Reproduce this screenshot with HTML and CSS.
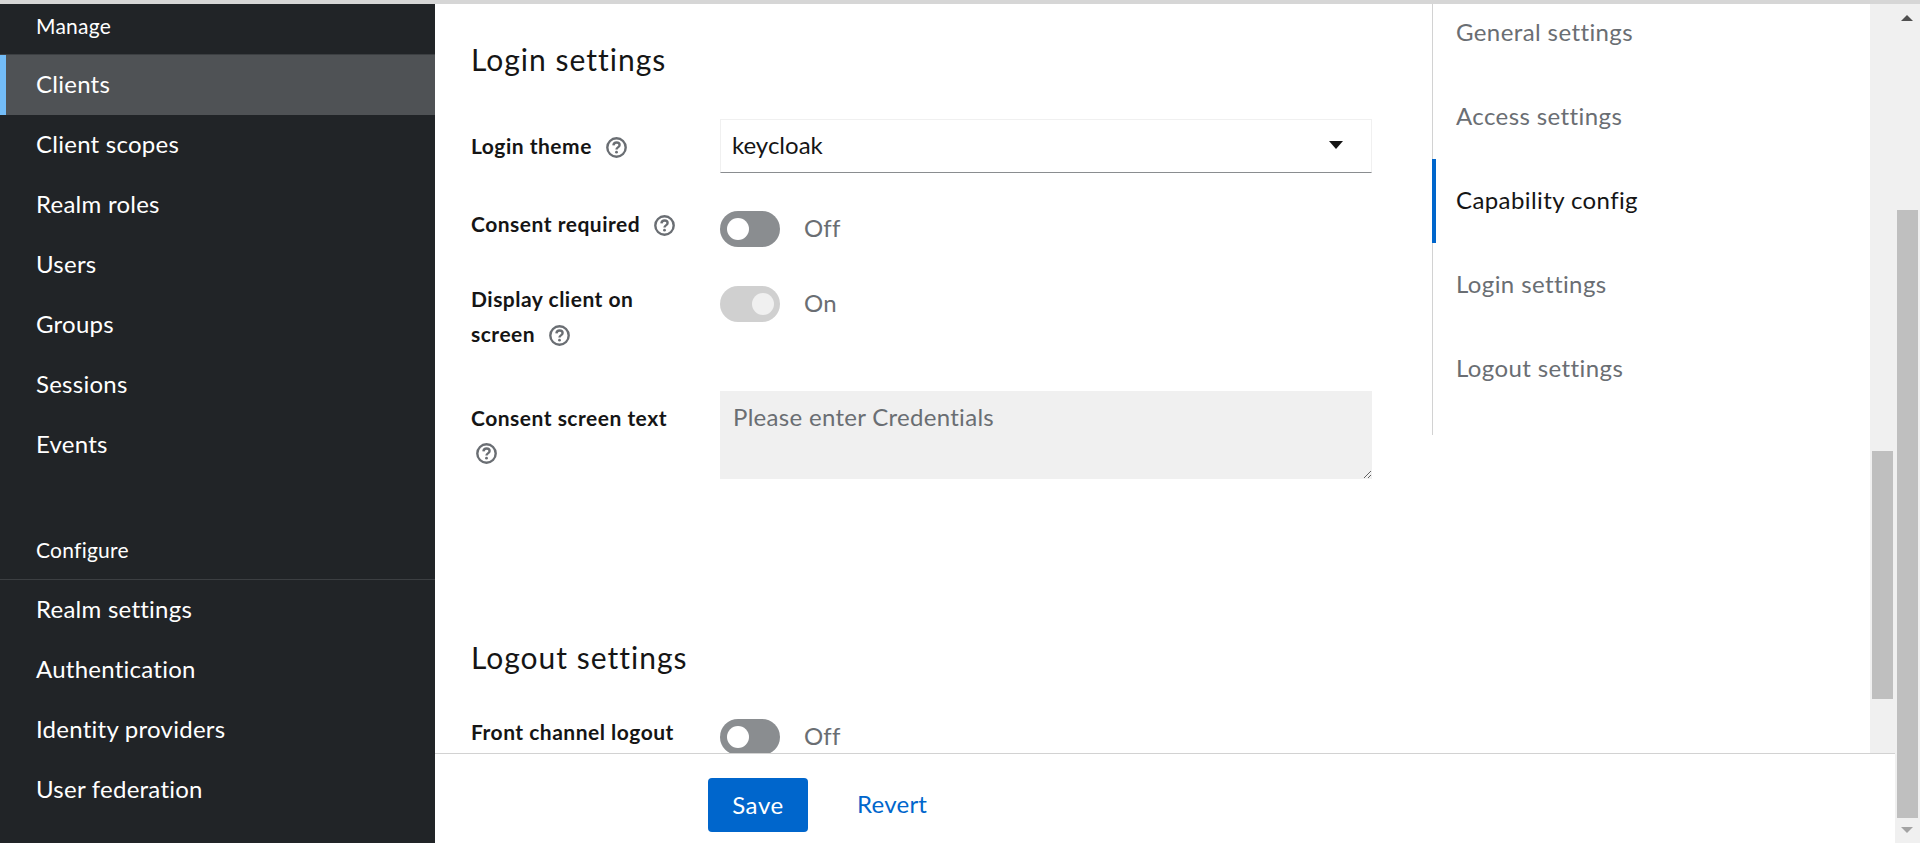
FILE: index.html
```html
<!DOCTYPE html>
<html lang="en">

<head>
    <meta charset="UTF-8">
    <meta name="viewport" content="width=device-width, initial-scale=1.0">
    <title>Client details</title>
    <link rel="stylesheet" href="styles.css">
</head>

<body>
    <div class="top-strip"></div>
    <div class="shell">
        <aside class="sidebar">
            <h2 class="nav-title">Manage</h2>
            <ul class="nav-list">
                <li class="nav-item nav-item-active">Clients</li>
                <li class="nav-item">Client scopes</li>
                <li class="nav-item">Realm roles</li>
                <li class="nav-item">Users</li>
                <li class="nav-item">Groups</li>
                <li class="nav-item">Sessions</li>
                <li class="nav-item">Events</li>
            </ul>
            <h2 class="nav-title nav-title-second">Configure</h2>
            <ul class="nav-list">
                <li class="nav-item">Realm settings</li>
                <li class="nav-item">Authentication</li>
                <li class="nav-item">Identity providers</li>
                <li class="nav-item">User federation</li>
            </ul>
        </aside>

        <div class="page">
            <div class="page-body">
                <main class="form-col">
                    <h2 class="section-title section-title-first">Login settings</h2>

                    <div class="form-row form-row-select">
                        <label class="field-label field-label-input">Login theme
                            <svg class="help-icon" viewBox="0 0 21 21"><circle cx="10.5" cy="10.5" r="9.2"/><path d="M7.4 8.3c.2-1.800 1.500-2.800 3.200-2.800 1.800 0 3 1.100 3 2.500 0 2.400-3.100 2.300-3.100 4.400"/><circle class="help-dot" cx="10.500" cy="15.200" r="1.400"/></svg>
                        </label>
                        <div class="select-box">
                            <span>keycloak</span>
                            <svg class="select-caret" viewBox="0 0 14 8"><path d="M0 0h14L7 8z"/></svg>
                        </div>
                    </div>

                    <div class="form-row">
                        <label class="field-label">Consent required
                            <svg class="help-icon" viewBox="0 0 21 21"><circle cx="10.5" cy="10.5" r="9.2"/><path d="M7.4 8.3c.2-1.800 1.500-2.800 3.200-2.800 1.800 0 3 1.100 3 2.500 0 2.400-3.100 2.300-3.100 4.400"/><circle class="help-dot" cx="10.500" cy="15.200" r="1.400"/></svg>
                        </label>
                        <div class="switch-field">
                            <span class="switch"><span class="switch-knob"></span></span>
                            <span class="switch-text">Off</span>
                        </div>
                    </div>

                    <div class="form-row form-row-tall">
                        <label class="field-label">Display client on screen
                            <svg class="help-icon" viewBox="0 0 21 21"><circle cx="10.5" cy="10.5" r="9.2"/><path d="M7.4 8.3c.2-1.800 1.500-2.800 3.200-2.800 1.800 0 3 1.100 3 2.500 0 2.400-3.100 2.300-3.100 4.400"/><circle class="help-dot" cx="10.500" cy="15.200" r="1.400"/></svg>
                        </label>
                        <div class="switch-field">
                            <span class="switch switch-on"><span class="switch-knob"></span></span>
                            <span class="switch-text">On</span>
                        </div>
                    </div>

                    <div class="form-row">
                        <label class="field-label field-label-input">Consent screen text
                            <svg class="help-icon help-icon-wrapped" viewBox="0 0 21 21"><circle cx="10.5" cy="10.5" r="9.2"/><path d="M7.4 8.3c.2-1.800 1.500-2.800 3.200-2.800 1.800 0 3 1.100 3 2.500 0 2.400-3.100 2.300-3.100 4.400"/><circle class="help-dot" cx="10.500" cy="15.200" r="1.400"/></svg>
                        </label>
                        <textarea class="text-box" placeholder="Please enter Credentials" disabled></textarea>
                    </div>

                    <h2 class="section-title section-title-next">Logout settings</h2>

                    <div class="form-row">
                        <label class="field-label">Front channel logout</label>
                        <div class="switch-field">
                            <span class="switch"><span class="switch-knob"></span></span>
                            <span class="switch-text">Off</span>
                        </div>
                    </div>
                </main>

                <nav class="jump-col">
                    <ul class="jump-list">
                        <li class="jump-item">General settings</li>
                        <li class="jump-item">Access settings</li>
                        <li class="jump-item jump-item-active">Capability config</li>
                        <li class="jump-item">Login settings</li>
                        <li class="jump-item">Logout settings</li>
                    </ul>
                </nav>

                <div class="inner-scroll"><div class="inner-thumb"></div></div>
            </div>

            <footer class="page-footer">
                <button class="btn-save">Save</button>
                <a class="btn-revert">Revert</a>
            </footer>
        </div>

        <div class="outer-scroll">
            <svg class="scroll-arrow" viewBox="0 0 12 6"><path d="M6 0l6 6H0z"/></svg>
            <div class="outer-thumb"></div>
            <svg class="scroll-arrow scroll-arrow-down" viewBox="0 0 12 6"><path d="M0 0h12L6 6z"/></svg>
        </div>
    </div>
</body>

</html>
```
FILE: styles.css
```css
* {
    margin: 0;
    padding: 0;
    box-sizing: border-box;
}

body {
    height: 843px;
    overflow: hidden;
    background-color: #ffffff;
    color: #151515;
    font-family: "Lato", "Noto Sans", sans-serif;
    font-size: 24px;
    letter-spacing: 0.25px;
}

.top-strip {
    height: 4px;
    background-color: #d6d6d6;
}

.shell {
    display: flex;
    height: 839px;
}

/* left nav */
.sidebar {
    width: 435px;
    flex-shrink: 0;
    background-color: #212427;
    color: #ffffff;
}

.nav-title {
    display: flex;
    align-items: center;
    height: 51px;
    padding: 0 36px 7px;
    border-bottom: 1px solid #3c3f42;
    font-size: 21px;
    font-weight: 400;
}

.nav-title-second {
    height: 55px;
    margin-top: 50px;
    padding-bottom: 5px;
}

.nav-list {
    list-style: none;
}

.nav-item {
    display: flex;
    align-items: center;
    height: 60px;
    padding: 0 0 3px 36px;
}

.nav-item-active {
    padding-left: 30px;
    border-left: 6px solid #73bcf7;
    background-color: #4f5255;
}

/* middle part */
.page {
    flex: 1;
    min-width: 0;
    display: flex;
    flex-direction: column;
}

.page-body {
    display: flex;
    height: 749px;
    overflow: hidden;
}

.form-col {
    width: 997px;
    padding: 33px 0 0 36px;
}

.section-title {
    height: 45px;
    margin-bottom: 36px;
    font-size: 30px;
    font-weight: 400;
    line-height: 45px;
    letter-spacing: 1px;
}

.section-title-first {
    margin-bottom: 37px;
}

.section-title-next {
    margin-top: 156px;
    margin-bottom: 34px;
}

.form-row {
    display: grid;
    grid-template-columns: 249px 652px;
    margin-bottom: 34px;
}

.form-row-select {
    margin-bottom: 33px;
}

.form-row-tall {
    margin-bottom: 40px;
}

.field-label {
    font-size: 21px;
    font-weight: 700;
    line-height: 35px;
    letter-spacing: 0.5px;
    padding-right: 30px;
}

.field-label-input {
    padding-top: 9px;
}

.help-icon {
    width: 21px;
    height: 21px;
    margin-left: 8px;
    vertical-align: -4px;
    fill: none;
    stroke: #6a6e73;
    stroke-width: 2.4;
}

.help-icon-wrapped {
    display: block;
    margin: 8px 0 0 5px;
}

.help-dot {
    fill: #6a6e73;
    stroke: none;
}

.select-box {
    display: flex;
    align-items: center;
    justify-content: space-between;
    height: 54px;
    padding: 0 28px 3px 11px;
    border: 1px solid #f0f0f0;
    border-bottom-color: #8a8d90;
    letter-spacing: 0;
}

.select-caret {
    width: 14px;
    height: 8px;
    fill: #151515;
}

.switch-field {
    display: flex;
    align-items: center;
    align-self: start;
    margin-top: 5px;
}

.switch {
    display: flex;
    align-items: center;
    width: 60px;
    height: 36px;
    padding-left: 7px;
    border-radius: 18px;
    background-color: #8a8d90;
}

.switch-knob {
    width: 22px;
    height: 22px;
    border-radius: 50%;
    background-color: #ffffff;
}

.switch-on {
    justify-content: flex-end;
    padding: 0 6px 0 0;
    background-color: #d0d0d0;
}

.switch-on .switch-knob {
    background-color: #f0f0f0;
}

.switch-text {
    margin-left: 24px;
    padding-bottom: 3px;
    color: #6a6e73;
}

.text-box {
    display: block;
    width: 652px;
    height: 88px;
    padding: 8px 13px;
    border: 0;
    background-color: #f0f0f0;
    font-family: inherit;
    font-size: 24px;
    letter-spacing: 0.3px;
    line-height: 36px;
}

.text-box::placeholder {
    color: #6a6e73;
    opacity: 1;
}

/* jump links */
.jump-col {
    width: 438px;
}

.jump-list {
    list-style: none;
    border-left: 1px solid #d2d2d2;
    height: 431px;
}

.jump-item {
    display: flex;
    align-items: center;
    height: 84px;
    margin-left: -1px;
    padding: 0 0 3px 24px;
    color: #6a6e73;
    letter-spacing: 0.4px;
}

.jump-item:first-child {
    height: 71px;
    padding-bottom: 16px;
}

.jump-item-active {
    border-left: 4px solid #0066cc;
    padding-left: 20px;
    color: #151515;
}

/* scroll bars */
.inner-scroll {
    flex: 1;
    padding: 447px 2px 0;
    background-color: #f0f0f0;
}

.inner-thumb {
    width: 21px;
    height: 248px;
    background-color: #bfbfbf;
}

.page-footer {
    display: flex;
    align-items: flex-start;
    height: 90px;
    padding: 24px 0 0 273px;
    border-top: 1px solid #d2d2d2;
}

.btn-save {
    width: 100px;
    height: 54px;
    padding-bottom: 2px;
    border: 0;
    border-radius: 4px;
    background-color: #0066cc;
    color: #ffffff;
    font-family: inherit;
    font-size: 24px;
    letter-spacing: 0.6px;
}

.btn-revert {
    margin-left: 49px;
    color: #0066cc;
    line-height: 52px;
}

.outer-scroll {
    width: 25px;
    flex-shrink: 0;
    display: flex;
    flex-direction: column;
    background-color: #f0f0f0;
}

.scroll-arrow {
    width: 12px;
    height: 6px;
    margin: 11px 0 0 6px;
    flex-shrink: 0;
    fill: #505050;
}

.outer-thumb {
    width: 21px;
    height: 608px;
    margin: 189px 0 0 2px;
    background-color: #bfbfbf;
}

.scroll-arrow-down {
    margin-top: 9px;
    fill: #a3a3a3;
}
```
